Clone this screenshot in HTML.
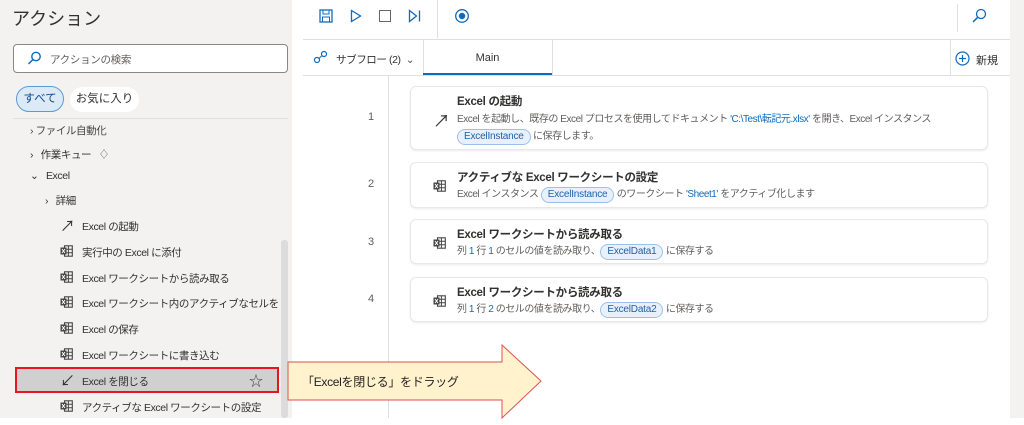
<!DOCTYPE html>
<html><head><meta charset="utf-8"><style>
*{margin:0;padding:0;box-sizing:border-box}
body{width:1024px;height:425px;overflow:hidden;background:#fff;font-family:"Liberation Sans","Noto Sans CJK JP",sans-serif;position:relative;color:#323130}
.abs{position:absolute}
#left{left:0;top:0;width:292px;height:418px;background:#f3f2f1}
.li{position:absolute;font-size:10.5px;letter-spacing:-0.4px;color:#323130;white-space:nowrap}
.xi{display:inline-block;width:13px;height:12px;position:absolute;left:0;top:0}
#right{left:303px;top:0;width:707px;height:418px;background:#fff}
.card{position:absolute;left:107px;width:578px;background:#fff;border:1px solid #e8e8e8;border-radius:6px;box-shadow:0 1px 2px rgba(0,0,0,.08)}
.ct{position:absolute;left:46px;font-size:11.5px;letter-spacing:-0.3px;font-weight:bold;color:#323130}
.cd{position:absolute;left:46px;font-size:10px;letter-spacing:-0.45px;color:#605e5c;white-space:nowrap}
.b{color:#0f6cbd}
.pill{display:inline-block;border:1px solid #9cc0ea;background:#e8f1fb;color:#1f5fa8;border-radius:10px;padding:0 6px;height:16px;line-height:14px;letter-spacing:-0.2px}
.num{position:absolute;left:65px;font-size:11px;color:#605e5c}
.ic{position:absolute;left:22px}
</style></head><body>
<svg width="0" height="0" style="position:absolute"><defs><symbol id="x" viewBox="0 0 13 12"><rect x="4.5" y="0.8" width="7.8" height="10.4" fill="none" stroke="#444" stroke-width="1.1"/><path d="M4.5 4.3H12.3M4.5 7.7H12.3M8.4 0.8V11.2" stroke="#444" stroke-width="1"/><rect x="0.5" y="2.5" width="6" height="7" fill="#444"/><path d="M2 4L5 8M5 4L2 8" stroke="#fff" stroke-width="1"/></symbol></defs></svg>
<div id="left" class="abs">
 <div class="abs" style="left:12px;top:5px;font-size:18px;color:#323130">アクション</div>
 <div class="abs" style="left:13px;top:44px;width:275px;height:29px;background:#fff;border:1px solid #8a8886;border-radius:4px"></div>
 <svg class="abs" style="left:27px;top:51px" width="14" height="14"><circle cx="9" cy="5.5" r="4.2" fill="none" stroke="#0f6cbd" stroke-width="1.4"/><line x1="6" y1="8.5" x2="1.5" y2="13" stroke="#0f6cbd" stroke-width="1.5"/></svg>
 <div class="abs" style="left:50px;top:52px;font-size:10.5px;letter-spacing:-0.3px;color:#605e5c">アクションの検索</div>
 <div class="abs" style="left:16px;top:86px;width:48px;height:26px;border:1.5px solid #5b9bd5;background:#dceaf8;border-radius:13px;font-size:11.5px;color:#0f4a8a;text-align:center;line-height:24px">すべて</div>
 <div class="abs" style="left:70px;top:87px;width:69px;height:25px;background:#fff;border-radius:13px;font-size:11.5px;color:#323130;text-align:center;line-height:25px">お気に入り</div>
 <div class="abs" style="left:13px;top:118px;width:275px;height:1px;background:#e1dfdd"></div>
 <div class="abs" style="left:0;top:119px;width:292px;height:299px;overflow:hidden">
  <div class="li" style="left:30px;top:4px;color:#444">› ファイル自動化</div>
  <div class="li" style="left:30px;top:28px">›&nbsp;&nbsp; 作業キュー&nbsp;&nbsp; <span style="color:#666">♢</span></div>
  <div class="li" style="left:30px;top:51px">⌄&nbsp;&nbsp; Excel</div>
  <div class="li" style="left:45px;top:74px">›&nbsp;&nbsp; 詳細</div>
 </div>
 <div class="li" style="left:60px;top:219px"><span style="font-size:15px;position:absolute;left:0;top:-4px">↗</span><span style="margin-left:22px">Excel の起動</span></div>
 <div class="li" style="left:60px;top:245px"><svg class="xi"><use href="#x"/></svg><span style="margin-left:22px">実行中の Excel に添付</span></div>
 <div class="li" style="left:60px;top:271px"><svg class="xi"><use href="#x"/></svg><span style="margin-left:22px">Excel ワークシートから読み取る</span></div>
 <div class="li" style="left:60px;top:296px;width:218px;overflow:hidden"><svg class="xi"><use href="#x"/></svg><span style="margin-left:22px">Excel ワークシート内のアクティブなセルを取...</span></div>
 <div class="li" style="left:60px;top:322px"><svg class="xi"><use href="#x"/></svg><span style="margin-left:22px">Excel の保存</span></div>
 <div class="li" style="left:60px;top:348px"><svg class="xi"><use href="#x"/></svg><span style="margin-left:22px">Excel ワークシートに書き込む</span></div>
 <div class="abs" style="left:281px;top:240px;width:7px;height:178px;background:#dcdcdc;border-radius:3px"></div>
 <div class="abs" style="left:15px;top:367px;width:264px;height:26px;background:#d0d0d0;border:2px solid #e8141e"></div>
 <div class="li" style="left:60px;top:374px"><span style="font-size:15px;position:absolute;left:0;top:-4px">↙</span><span style="margin-left:22px">Excel を閉じる</span></div>
 <div class="li" style="left:249px;top:371px;font-size:14px;color:#444">☆</div>
 <div class="li" style="left:60px;top:400px"><svg class="xi"><use href="#x"/></svg><span style="margin-left:22px">アクティブな Excel ワークシートの設定</span></div>
</div>
<div class="abs" style="left:1010px;top:0;width:14px;height:418px;background:#f3f2f1"></div>
<div id="right" class="abs">
 <svg class="abs" style="left:16px;top:9px" width="14" height="14"><rect x="1" y="1" width="12" height="12" fill="none" stroke="#0f6cbd" stroke-width="1.3"/><rect x="4" y="1" width="6" height="4" fill="none" stroke="#0f6cbd"/><rect x="3.5" y="8" width="7" height="5" fill="none" stroke="#0f6cbd"/></svg>
 <svg class="abs" style="left:47px;top:9px" width="12" height="14"><path d="M1.5 1.5 L10.5 7 L1.5 12.5Z" fill="none" stroke="#0f6cbd" stroke-width="1.3"/></svg>
 <div class="abs" style="left:76px;top:10px;width:12px;height:12px;border:1.3px solid #666"></div>
 <svg class="abs" style="left:105px;top:9px" width="14" height="14"><path d="M1.5 1.5 L8.5 7 L1.5 12.5Z" fill="none" stroke="#0f6cbd" stroke-width="1.3"/><line x1="11.5" y1="1.5" x2="11.5" y2="12.5" stroke="#0f6cbd" stroke-width="1.3"/></svg>
 <div class="abs" style="left:134px;top:0;width:1px;height:38px;background:#e1dfdd"></div>
 <svg class="abs" style="left:151px;top:8px" width="16" height="16"><circle cx="8" cy="8" r="6.3" fill="none" stroke="#0f6cbd" stroke-width="1.3"/><circle cx="8" cy="8" r="3.2" fill="#0f6cbd"/></svg>
 <div class="abs" style="left:654px;top:4px;width:1px;height:28px;background:#e1dfdd"></div>
 <svg class="abs" style="left:668px;top:8px" width="16" height="16"><circle cx="10" cy="6" r="4.5" fill="none" stroke="#0f6cbd" stroke-width="1.3"/><line x1="6.8" y1="9.2" x2="2" y2="14" stroke="#0f6cbd" stroke-width="1.5"/></svg>
 <div class="abs" style="left:0;top:39px;width:707px;height:1px;background:#e1dfdd"></div>
 <svg class="abs" style="left:10px;top:50px" width="16" height="14"><circle cx="4" cy="10" r="2.5" fill="none" stroke="#0f6cbd" stroke-width="1.2"/><circle cx="11" cy="4" r="2.5" fill="none" stroke="#0f6cbd" stroke-width="1.2"/><line x1="6" y1="8.5" x2="9" y2="5.5" stroke="#0f6cbd"/></svg>
 <div class="abs" style="left:33px;top:52px;font-size:10.5px;letter-spacing:-0.4px">サブフロー (2)&nbsp; <span style="color:#555">⌄</span></div>
 <div class="abs" style="left:120px;top:40px;width:1px;height:35px;background:#e1dfdd"></div>
 <div class="abs" style="left:120px;top:40px;width:129px;height:35px;font-size:11px;text-align:center;line-height:36px;border-bottom:2px solid #0f6cbd">Main</div>
 <div class="abs" style="left:249px;top:40px;width:1px;height:35px;background:#e1dfdd"></div>
 <div class="abs" style="left:647px;top:40px;width:1px;height:35px;background:#e1dfdd"></div>
 <svg class="abs" style="left:652px;top:51px" width="15" height="15"><circle cx="7.5" cy="7.5" r="6.5" fill="none" stroke="#0f6cbd" stroke-width="1.2"/><path d="M7.5 4V11M4 7.5H11" stroke="#0f6cbd" stroke-width="1.2"/></svg>
 <div class="abs" style="left:673px;top:52px;font-size:11px">新規</div>
 <div class="abs" style="left:0;top:75px;width:707px;height:1px;background:#e1dfdd"></div>
 <div class="abs" style="left:85px;top:76px;width:1px;height:342px;background:#e1dfdd"></div>

 <div class="num" style="top:111px">1</div>
 <div class="card" style="top:86px;height:64px">
  <div class="ic" style="top:20px;font-size:17px">↗</div>
  <div class="ct" style="top:6px">Excel の起動</div>
  <div class="cd" style="top:23px">Excel を起動し、既存の Excel プロセスを使用してドキュメント <span class="b">'C:\Test\転記元.xlsx'</span> を開き、Excel インスタンス</div>
  <div class="cd" style="top:40px"><span class="pill">ExcelInstance</span> に保存します。</div>
 </div>
 <div class="num" style="top:178px">2</div>
 <div class="card" style="top:162px;height:46px">
  <svg class="ic" style="top:17px" width="13" height="12"><use href="#x"/></svg>
  <div class="ct" style="top:6px">アクティブな Excel ワークシートの設定</div>
  <div class="cd" style="top:22px">Excel インスタンス <span class="pill">ExcelInstance</span> のワークシート <span class="b">'Sheet1'</span> をアクティブ化します</div>
 </div>
 <div class="num" style="top:236px">3</div>
 <div class="card" style="top:219px;height:45px">
  <svg class="ic" style="top:17px" width="13" height="12"><use href="#x"/></svg>
  <div class="ct" style="top:6px">Excel ワークシートから読み取る</div>
  <div class="cd" style="top:22px">列 <span class="b">1</span> 行 <span class="b">1</span> のセルの値を読み取り、<span class="pill">ExcelData1</span> に保存する</div>
 </div>
 <div class="num" style="top:293px">4</div>
 <div class="card" style="top:277px;height:45px">
  <svg class="ic" style="top:17px" width="13" height="12"><use href="#x"/></svg>
  <div class="ct" style="top:6px">Excel ワークシートから読み取る</div>
  <div class="cd" style="top:22px">列 <span class="b">1</span> 行 <span class="b">2</span> のセルの値を読み取り、<span class="pill">ExcelData2</span> に保存する</div>
 </div>
</div>
<svg class="abs" style="left:286px;top:343px" width="260" height="80"><path d="M2 19 H216 V2 L255 38 L216 75 V57 H2 Z" fill="#fff2cc" stroke="#d9534f" stroke-width="1"/></svg>
<div class="abs" style="left:302px;top:373px;font-size:12px;letter-spacing:-0.3px;color:#222">「Excelを閉じる」をドラッグ</div>
</body></html>
